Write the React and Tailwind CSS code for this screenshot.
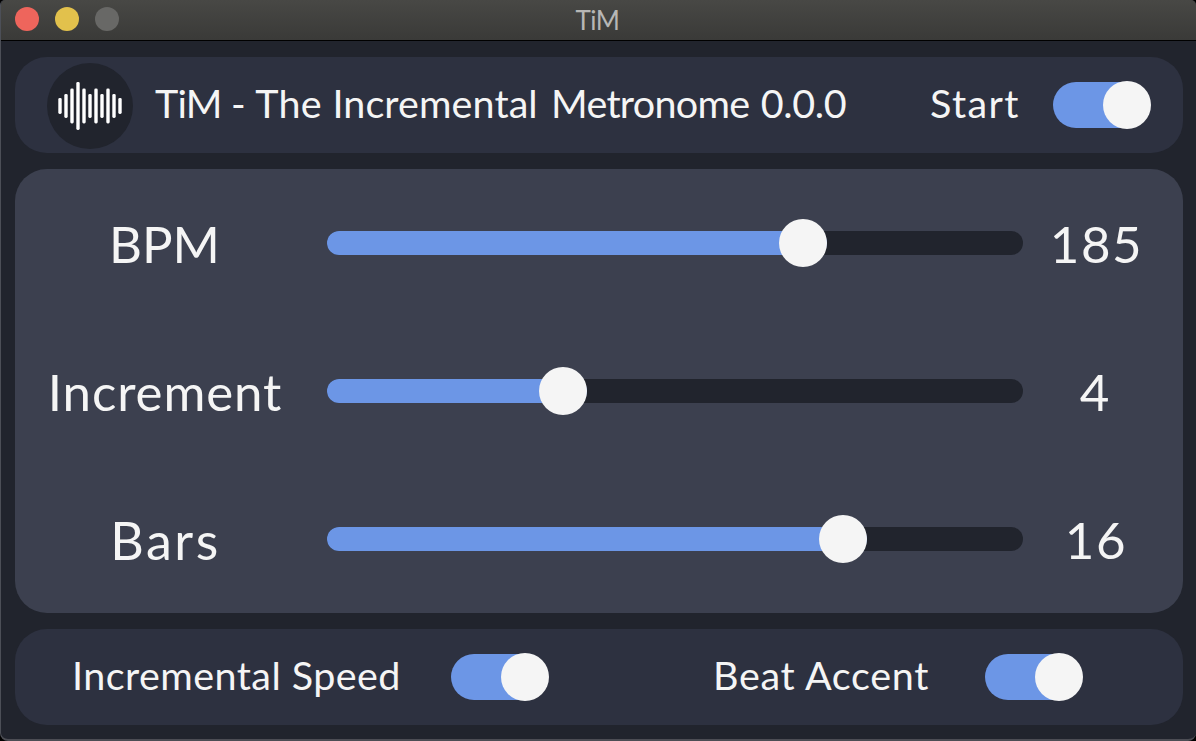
const BARS = [16, 24, 35, 48, 35, 24, 35, 24, 35, 24, 16];

function Logo() {
  return (
    <svg className="h-[86px] w-[86px] shrink-0" viewBox="0 0 86 86">
      <circle cx="43" cy="43" r="43" fill="#21242d" />
      {BARS.map((h, i) => (
        <rect key={i} x={11.3 + i * 6} y={43 - h / 2} width="3.4" height={h} rx="1.4" fill="#ffffff" />
      ))}
    </svg>
  );
}

function Toggle() {
  return (
    <div className="flex h-12 w-[98px] shrink-0 items-center">
      <div className="flex h-[46px] w-[97px] items-center rounded-full bg-[#6c96e6] pl-[50px]">
        <div className="h-12 w-12 shrink-0 rounded-full bg-[#f5f5f5]" />
      </div>
    </div>
  );
}

function SliderRow({ label, value, fill, labelClass, valueClass }) {
  return (
    <div className="flex h-[148px] items-center">
      <div className="flex w-[312px] justify-center pr-[12px] pt-[2px] text-[51px] leading-[60px]">
        <span className={labelClass}>{label}</span>
      </div>
      <div className="flex h-6 w-[696px] items-center rounded-full bg-[#21242d]">
        <div className="flex h-6 items-center justify-end rounded-full bg-[#6c96e6]" style={{ width: fill }}>
          <div className="h-12 w-12 shrink-0 rounded-full bg-[#f5f5f5]" />
        </div>
      </div>
      <div className="flex w-[146px] justify-center pt-[2px] text-[51px] leading-[60px]">
        <span className={valueClass}>{value}</span>
      </div>
    </div>
  );
}

export default function App() {
  return (
    <div className="h-[741px] w-[1196px] overflow-hidden bg-black font-['Lato',sans-serif] text-[#f5f5f5]">
      <div className="flex h-full w-full flex-col overflow-hidden rounded-t-[5px] rounded-b-[8px] border-b-2 border-l border-b-[#4c4d54] border-l-[#4c4f57] bg-[#21242d]">
        <div className="grid h-[41px] shrink-0 grid-cols-3 items-center border-b border-black bg-linear-to-b from-[#484845] to-[#3a3a38]">
          <div className="flex gap-4 pb-[2px] pl-[14px]">
            <div className="h-6 w-6 rounded-full bg-[#ee655c]" />
            <div className="h-6 w-6 rounded-full bg-[#e2c14c]" />
            <div className="h-6 w-6 rounded-full bg-[#686866]" />
          </div>
          <div className="pr-[2px] text-center text-[26px] leading-[38px] tracking-[-0.5px] text-[#b7b7b5]">TiM</div>
        </div>
        <div className="flex flex-col gap-4 pl-[14px] pt-4">
          <div className="flex h-24 w-[1168px] items-center rounded-[32px] bg-[#2d3140] pl-8 text-[39.5px] leading-[48px]">
            <div className="pt-[2px]"><Logo /></div>
            <div className="flex w-[775px] whitespace-pre pb-[5px] pl-[22px]">
              <span className="tracking-[-0.8px]">TiM - </span>
              <span className="pl-[1px] tracking-[0.3px]">The </span>
              <span className="tracking-[0.1px]">Incremental </span>
              <span className="pl-[3px] tracking-[-0.7px]">Metronome </span>
              <span className="pl-[2px] tracking-[-0.4px]">0.0.0</span>
            </div>
            <div className="flex w-[145px] whitespace-nowrap pb-[5px] pl-[22px]">
              <span className="tracking-[1.4px]">Start</span>
            </div>
            <Toggle />
          </div>
          <div className="flex h-[444px] w-[1168px] flex-col rounded-[32px] bg-[#3c404f]">
            <SliderRow label="BPM" value="185" fill="500px" labelClass="-ml-[1px]" valueClass="-mr-[1px] tracking-[1.6px]" />
            <SliderRow label="Increment" value="4" fill="260px" labelClass="tracking-[0.9px]" valueClass="-ml-[3px]" />
            <SliderRow label="Bars" value="16" fill="540px" labelClass="-mr-[1px] text-[52px] tracking-[2.6px]" valueClass="tracking-[1.6px]" />
          </div>
          <div className="flex h-24 w-[1168px] items-center rounded-[32px] bg-[#2d3140] text-[39.5px] leading-[48px]">
            <div className="flex w-[436px] whitespace-nowrap pb-[5px] pl-[57px]">
              <span className="tracking-[0.44px]">Incremental Speed</span>
            </div>
            <Toggle />
            <div className="flex w-[436px] whitespace-nowrap pb-[5px] pl-[164px]">
              <span className="tracking-[0.7px]">Beat Accent</span>
            </div>
            <Toggle />
          </div>
        </div>
      </div>
    </div>
  );
}
